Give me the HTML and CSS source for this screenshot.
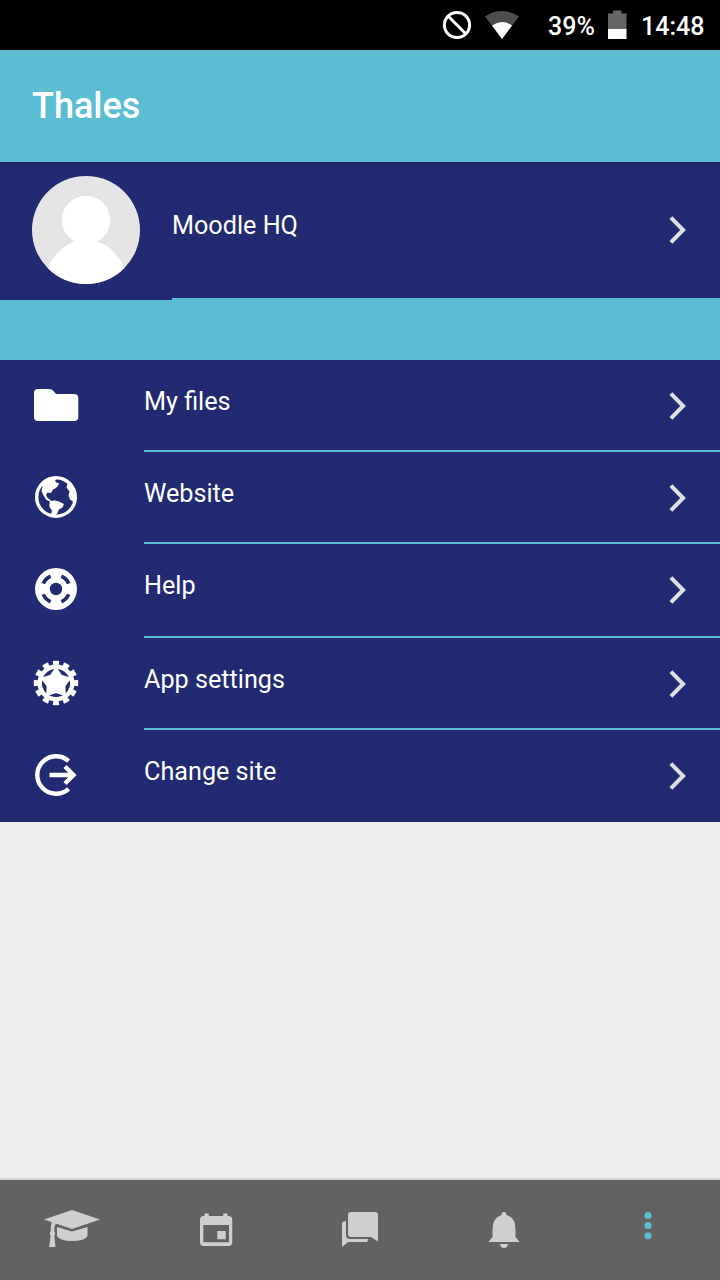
FILE: index.html
```html
<!DOCTYPE html>
<html lang="en">
<head>
<meta charset="utf-8">
<title>Thales</title>
<link rel="stylesheet" href="styles.css">
</head>
<body>
<svg class="defs" width="0" height="0" aria-hidden="true">
  <symbol id="chevron" viewBox="0 0 24 32"><path d="M4.900 3.600L17.100 16L4.900 28.400" fill="none" stroke="currentColor" stroke-width="4"/></symbol>
</svg>
<div class="app">
  <div class="status">
    <svg class="status-block" viewBox="0 0 30 30"><circle cx="15" cy="15" r="12.6" fill="none" stroke="#fff" stroke-width="3"/><path d="M6.3 6.3L23.7 23.7" stroke="#fff" stroke-width="3"/></svg>
    <svg class="status-wifi" viewBox="0 0 36 30"><path d="M1 6.4Q18 -4.400 35 6.400L18 29Z" fill="#4d4d4d"/><path d="M8 15.500Q18 8.500 28 15.500L18 29Z" fill="#fff"/></svg>
    <span class="status-battery-text">39%</span>
    <svg class="status-battery" viewBox="0 0 20 30"><path d="M1 3.500H6V.5H14.500V3.500H19.500V20H1Z" fill="#666"/><path d="M1 19H19.500V29H1Z" fill="#fff"/></svg>
    <span class="status-time">14:48</span>
  </div>
  <header class="header"><h1 class="title">Thales</h1></header>
  <main class="content">
    <a class="profile">
      <svg class="avatar" viewBox="0 0 108 108"><clipPath id="round"><circle cx="54" cy="54" r="54"/></clipPath><g clip-path="url(#round)"><path d="M0 0H108V108H0Z" fill="#e5e5e5"/><circle cx="54" cy="44" r="24.200" fill="#fff"/><path d="M10 108C17 83 30 68 45 65H63C80 69 92 84 98 108Z" fill="#fff"/></g></svg>
      <span class="profile-body"><span class="label">Moodle HQ</span><svg class="chevron"><use href="#chevron"/></svg></span>
    </a>
    <div class="spacer"></div>
    <nav class="menu">
      <a class="row">
        <svg class="icon" viewBox="0 0 48 48"><path d="M2 12Q2 8 6 8H17Q20 8 21.500 10L24 13H42Q46.300 13 46.300 17V36Q46.300 40 42 40H6Q2 40 2 36Z" fill="#fff"/></svg>
        <span class="row-body"><span class="label">My files</span><svg class="chevron"><use href="#chevron"/></svg></span>
      </a>
      <a class="row">
        <svg class="icon" viewBox="0 0 48 48"><circle cx="24" cy="24" r="19.300" fill="none" stroke="#fff" stroke-width="3.400"/><path d="M10 11L14 7L20 4.500L25 5L23 8L25 10L27 10L26 13L24 15L21 16.500L19 20L15.500 19.500L14 22L15.500 25L18 26.500L19 29L14.500 27L11.500 22.500L9.500 18L10.500 13Z" fill="#fff"/><path d="M18 28L23 27.500L27 28.500L32 31L30.500 34.500L27 36.500L25.500 40L23 43L19 41.500L20 37.500L17.500 34L17.500 31Z" fill="#fff"/><path d="M31 5L38 9L43 16L44.500 27L41.500 29L38 26.500L36.500 22.500L37.500 18.500L34.500 14.500L35.500 11L33 8Z" fill="#fff"/></svg>
        <span class="row-body"><span class="label">Website</span><svg class="chevron"><use href="#chevron"/></svg></span>
      </a>
      <a class="row row-tall">
        <svg class="icon" viewBox="0 0 48 48"><circle cx="24" cy="24" r="21" fill="#fff"/><circle cx="24" cy="24" r="6.200" fill="#222a72"/><path d="M29.400 11.300A13.800 13.800 0 0 1 36.700 18.600M36.700 29.400A13.800 13.800 0 0 1 29.400 36.700M18.600 36.700A13.800 13.800 0 0 1 11.300 29.400M11.300 18.600A13.800 13.800 0 0 1 18.600 11.300" fill="none" stroke="#222a72" stroke-width="3.700"/></svg>
        <span class="row-body"><span class="label">Help</span><svg class="chevron"><use href="#chevron"/></svg></span>
      </a>
      <a class="row">
        <svg class="icon" viewBox="0 0 48 48"><circle cx="24" cy="24" r="16.300" fill="none" stroke="#fff" stroke-width="4.400"/><circle cx="24" cy="24" r="19.700" fill="none" stroke="#fff" stroke-width="5" pathLength="120" stroke-dasharray="5.800 4.200" stroke-dashoffset="2.900"/><path d="M24 9L29.400 16.600L38.300 19.400L32.700 26.800L32.800 36.100L24 33.200L15.200 36.100L15.300 26.800L9.700 19.400L18.600 16.600Z" fill="#fff" stroke="#fff" stroke-width="1.600"/></svg>
        <span class="row-body"><span class="label">App settings</span><svg class="chevron"><use href="#chevron"/></svg></span>
      </a>
      <a class="row row-last">
        <svg class="icon" viewBox="0 0 48 48"><path d="M36.600 10.200A18.700 18.700 0 1 0 36.600 37.800M17.500 24H41.500M33 15.500L41.500 24L33 32.500" fill="none" stroke="#fff" stroke-width="4.400"/></svg>
        <span class="row-body"><span class="label">Change site</span><svg class="chevron"><use href="#chevron"/></svg></span>
      </a>
    </nav>
  </main>
  <footer class="tabs">
    <a class="tab"><svg class="tab-icon" viewBox="0 0 60 44"><path d="M2 13.500L30 4L58 13.500L30 23Z"/><path d="M15 21L30 25.500L45.500 21V30Q43 35 30 35Q18 35 15 30Z"/><path d="M10 15.500L14 17Q12.300 20 12.300 25Q14 28 12.300 30L13.500 41H7L8.700 30Q7 28 8.700 25Q8.500 19 10 15.500Z"/></svg></a>
    <a class="tab"><svg class="tab-icon" viewBox="0 0 60 44"><path fill-rule="evenodd" d="M18.500 7.500H22.800V10H37.200V7.500H41.500V10H42.500Q46.300 10 46.300 14V36Q46.300 40 42.500 40H17.500Q14 40 14 36V14Q14 10 17.500 10H18.500ZM17.300 19V36.300H43V19ZM31.300 25H39.700V33.300H31.300Z"/></svg></a>
    <a class="tab"><svg class="tab-icon" viewBox="0 0 60 44"><path d="M21 6H45Q48 6 48 9V35.500L41 31H21Q18 31 18 28V9Q18 6 21 6Z"/><path d="M16 15V29Q16 33 20 33H38.500L37 36H18L12 41V18Q12 15 16 15Z"/></svg></a>
    <a class="tab"><svg class="tab-icon" viewBox="0 0 60 44"><path d="M27.500 9Q27.500 6 30 6T32.500 9Q41.500 12 41.500 23V31L45.500 36H14.500L18.500 31V23Q18.500 12 27.500 9ZM26 38H34Q33.500 42 30 42T26 38Z"/></svg></a>
    <a class="tab tab-active"><svg class="tab-icon" viewBox="0 0 60 44"><circle cx="30" cy="9.500" r="3.500"/><circle cx="30" cy="19.500" r="3.500"/><circle cx="30" cy="29.800" r="3.500"/></svg></a>
  </footer>
</div>
</body>
</html>
```
FILE: styles.css
```css
* { box-sizing: border-box; }
body { margin: 0; font-family: Roboto, sans-serif; background: #eee; }
.defs { display: block; }
.app { display: flex; flex-direction: column; width: 720px; height: 1280px; }
.status { display: flex; height: 50px; flex: none; padding: 10px 16px 0 0; justify-content: flex-end; background: #000; color: #fff; font-size: 25px; font-weight: 500; line-height: 34px; }
.status svg { height: 30px; flex: none; }
.status-block { width: 30px; margin-right: 12px; }
.status-wifi { width: 36px; margin-right: 28px; }
.status-battery-text { width: 47px; margin-right: 12px; }
.status-battery { width: 20px; margin-right: 14px; }
.status-time { width: 63px; }
.header { display: flex; flex: none; align-items: center; height: 112px; padding-left: 32px; background: #5bbdd1; color: #fff; }
.title { margin: 0; font-size: 36px; font-weight: 500; line-height: 42px; }
.content { flex: 1; }
.profile { display: flex; height: 138px; background: linear-gradient(#202463, #222a72 6px); }
.avatar { width: 108px; height: 108px; margin: 14px 32px 0; flex: none; }
.profile-body { display: flex; flex: 1; justify-content: space-between; padding: 49px 30px 0 0; border-bottom: 2px solid #5bbdd1; }
.label { color: #fff; font-size: 25.200px; line-height: 30px; }
.chevron { width: 24px; height: 32px; margin-top: 3px; color: #dedfe5; }
.spacer { height: 60px; background: #5bbdd1; }
.menu { background: #222a72; }
.row { display: flex; height: 92px; }
.row-tall { height: 94px; }
.icon { width: 48px; height: 48px; margin: 21px 64px 0 32px; flex: none; }
.row-body { display: flex; flex: 1; justify-content: space-between; padding: 27px 30px 0 0; border-bottom: 2px solid #5bbdd1; }
.row-last .row-body { border-bottom: 0; }
.tabs { display: flex; flex: none; height: 102px; padding-top: 26px; border-top: 2px solid #d6d6d6; background: #626262; }
.tab { display: flex; flex: 1; justify-content: center; color: #cfcfcf; }
.tab-active { color: #5bbdd1; }
.tab-icon { width: 60px; height: 44px; fill: currentColor; }
```
